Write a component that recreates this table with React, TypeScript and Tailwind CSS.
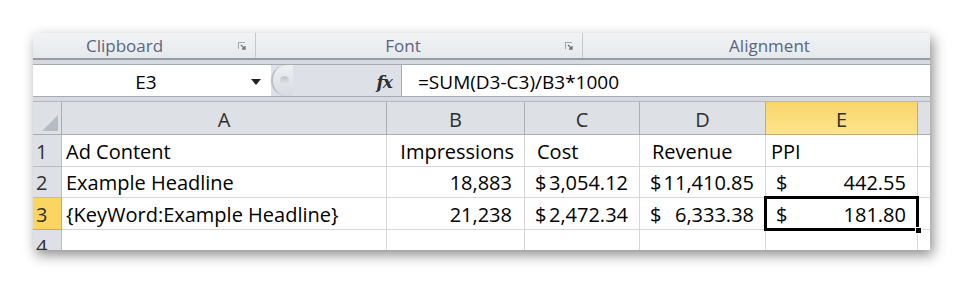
import React from 'react';

const COLS = [
  { key: 'A', w: 'w-[325px]' },
  { key: 'B', w: 'w-[138px]' },
  { key: 'C', w: 'w-[115px]' },
  { key: 'D', w: 'w-[126px]' },
  { key: 'E', w: 'w-[152px]' },
];

const ROWS: { h: string; cells: React.ReactNode[] }[] = [
  {
    h: 'h-[32px]',
    cells: [
      <span className="pl-[4px]">Ad Content</span>,
      <span className="ml-auto pr-[10px]">Impressions</span>,
      <span className="pl-[12px]">Cost</span>,
      <span className="pl-[12px]">Revenue</span>,
      <span className="pl-[5px]">PPI</span>,
    ],
  },
  {
    h: 'h-[31px]',
    cells: [
      <span className="pl-[4px]">Example Headline</span>,
      <Num v="18,883" />,
      <Money v="3,054.12" />,
      <Money v="11,410.85" />,
      <Money v="442.55" />,
    ],
  },
  {
    h: 'h-[32px]',
    cells: [
      <span className="pl-[4px]">{'{KeyWord:Example Headline}'}</span>,
      <Num v="21,238" />,
      <Money v="2,472.34" />,
      <Money v="6,333.38" />,
      <Money v="181.80" />,
    ],
  },
];

function Num({ v }: { v: string }) {
  return <span className="ml-auto pr-[12px]">{v}</span>;
}

function Money({ v }: { v: string }) {
  return (
    <span className="flex w-full justify-between pl-[10px] pr-[11px]">
      <span>$</span>
      <span>{v}</span>
    </span>
  );
}

function Launcher() {
  return (
    <svg width="10" height="10" viewBox="0 0 10 10" className="shrink-0">
      <path d="M1 1h7v1H2v6H1z" fill="#a3a8b0" />
      <path d="M4 4l4 4M8 5v3H5" stroke="#6d7480" strokeWidth="1.3" fill="none" />
    </svg>
  );
}

export default function App() {
  return (
    <div className="w-[963px] h-[283px] bg-white pl-[33px] pt-[33px] font-['Open_Sans',sans-serif]">
      <div className="w-[897px] h-[217px] overflow-hidden bg-white shadow-[3px_5px_12px_rgba(0,0,0,0.45)] flex flex-col">
        {/* ribbon group labels */}
        <div className="flex h-[27px] shrink-0 bg-gradient-to-b from-[#f1f3f5] to-[#e6e9ec] text-[17px] text-[#5a6580] border-b-2 border-[#959ba3]">
          <div className="w-[223px] flex items-center border-r border-[#c5c9cf] pl-[53px] pr-[8px]">
            <span className="flex-1 pt-[1px]">Clipboard</span>
            <Launcher />
          </div>
          <div className="w-[327px] flex items-center border-r border-[#c5c9cf] pr-[8px]">
            <span className="flex-1 text-center pr-[14px] pt-[1px]">Font</span>
            <Launcher />
          </div>
          <div className="flex-1 flex items-center justify-center pl-[26px] pt-[1px]">Alignment</div>
        </div>

        {/* formula bar */}
        <div className="h-[4px] shrink-0 bg-[#d6dae0]" />
        <div className="flex h-[33px] shrink-0 border-y border-[#a5abb3] bg-white text-[19px] text-black leading-[24px]">
          <div className="w-[238px] flex items-end pb-[2px]">
            <span className="flex-1 text-center pl-[8px]">E3</span>
            <svg width="10" height="6" viewBox="0 0 10 6" className="mr-[10px] mb-[9px]">
              <path d="M0 0h10L5 6z" fill="#222" />
            </svg>
          </div>
          <div className="w-[131px] flex items-center bg-[#dde1e7] border-r border-[#a5abb3]">
            <div className="h-[31px] w-[22px] rounded-l-full border-l-2 border-[#b9bec6] bg-gradient-to-b from-[#eef0f3] to-[#d7dbe1] flex items-center pl-[7px]">
              <span className="w-[9px] h-[9px] rounded-full bg-gradient-to-b from-[#bfc3c9] to-[#e4e6ea]" />
            </div>
            <span className="ml-auto mr-[9px] mt-[3px] font-['DejaVu_Serif',serif] italic font-bold text-[17px] text-[#2e2e2e] tracking-[-1px]">
              fx
            </span>
          </div>
          <div className="flex-1 flex items-end pb-[2px] pl-[16px]">=SUM(D3-C3)/B3*1000</div>
        </div>
        <div className="h-[5px] shrink-0 bg-[#d6dae0] border-b border-[#b3b8bf]" />

        {/* grid */}
        <div className="flex-1 flex flex-col text-[20px] leading-[24px] text-black">
          <div className="flex h-[33px] shrink-0">
            <div className="w-[29px] bg-[#dde1e6] border-r border-b border-[#a9aeb6] flex items-end justify-end p-[3px]">
              <svg width="16" height="16" viewBox="0 0 16 16">
                <path d="M16 0V16H0z" fill="#b7bcc3" />
              </svg>
            </div>
            {COLS.map((c) => (
              <div
                key={c.key}
                className={`${c.w} flex items-end pb-[2px] justify-center text-[#2f2f2f] border-r border-b ${
                  c.key === 'E'
                    ? 'bg-gradient-to-b from-[#f8d56a] to-[#fde48c] border-[#e0a542]'
                    : 'bg-[#dde1e6] border-[#a9aeb6]'
                }`}
              >
                {c.key}
              </div>
            ))}
            <div className="flex-1 bg-[#dde1e6] border-b border-[#a9aeb6]" />
          </div>

          {ROWS.map((r, ri) => (
            <div key={ri} className={`flex ${r.h} shrink-0`}>
              <div
                className={`w-[29px] flex items-end pb-[2px] pl-[3px] text-[#2f2f2f] border-r border-b ${
                  ri === 2 ? 'bg-[#fbd562] border-[#e0a542]' : 'bg-[#dde1e6] border-[#b7bcc3]'
                }`}
              >
                {ri + 1}
              </div>
              {COLS.map((c, ci) => {
                const sel = ri === 2 && c.key === 'E';
                return (
                  <div
                    key={c.key}
                    className={`${c.w} relative flex items-end pb-[2px] whitespace-nowrap border-r border-b border-[#d6d6d6]`}
                  >
                    {r.cells[ci]}
                    {sel && (
                      <>
                        <div className="absolute -left-[2px] -top-[2px] right-[-2px] bottom-[-2px] border-[3px] border-black pointer-events-none" />
                        <div className="absolute right-[-5px] bottom-[-5px] w-[7px] h-[7px] bg-black border border-white" />
                      </>
                    )}
                  </div>
                );
              })}
              <div className="flex-1 border-b border-[#d6d6d6]" />
            </div>
          ))}

          <div className="flex h-[31px] shrink-0">
            <div className="w-[29px] bg-[#dde1e6] border-r border-[#b7bcc3] flex items-end pb-[2px] pl-[3px] text-[#2f2f2f]">
              4
            </div>
            {COLS.map((c) => (
              <div key={c.key} className={`${c.w} border-r border-[#d6d6d6]`} />
            ))}
            <div className="flex-1" />
          </div>
        </div>
      </div>
    </div>
  );
}
